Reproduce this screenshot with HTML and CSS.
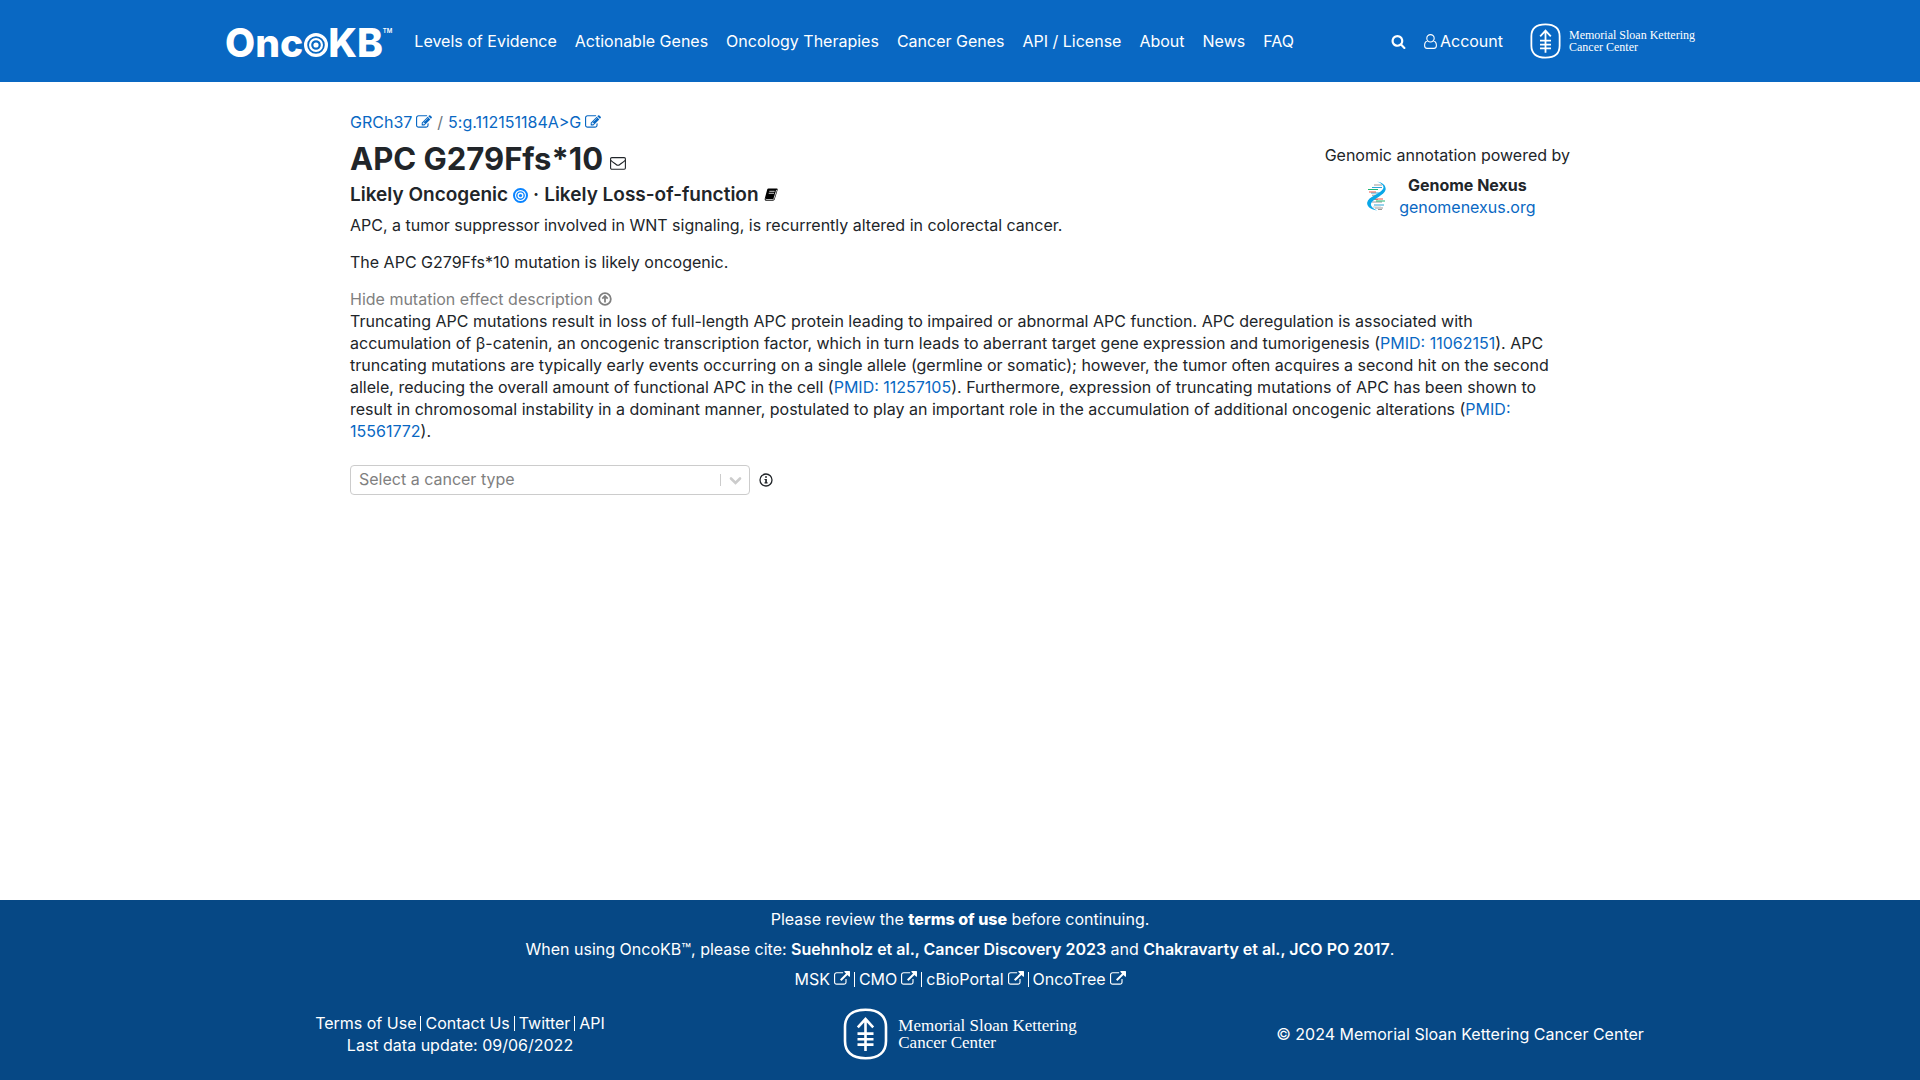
FILE: index.html
```html
<!DOCTYPE html>
<html lang="en">
<head>
<meta charset="utf-8">
<meta name="viewport" content="width=device-width, initial-scale=1">
<title>APC G279Ffs*10 | OncoKB</title>
<link rel="stylesheet" href="styles.css">
</head>
<body>
<svg class="sprite" aria-hidden="true">
  <symbol id="search" viewBox="0 0 1792 1792"><path fill="currentColor" d="M1216 832q0-185-131.500-316.500t-316.500-131.500-316.500 131.500-131.500 316.500 131.500 316.500 316.500 131.500 316.500-131.500 131.500-316.500zm512 832q0 52-38 90t-90 38q-54 0-90-38l-343-342q-179 124-399 124-143 0-273.500-55.500t-225-150-150-225-55.500-273.500 55.500-273.500 150-225 225-150 273.500-55.500 273.500 55.500 225 150 150 225 55.500 273.500q0 220-124 399l343 343q37 37 37 90z"/></symbol>
  <symbol id="edit" viewBox="0 0 1792 1792"><path fill="currentColor" d="M888 1184l116-116-152-152-116 116v56h96v96h56zm440-720q-16-16-33 1l-350 350q-17 17-1 33t33-1l350-350q17-17 1-33zm80 594v190q0 119-84.500 203.500t-203.500 84.500h-832q-119 0-203.500-84.500t-84.500-203.500v-832q0-119 84.500-203.500t203.500-84.500h832q63 0 117 25 15 7 18 23 3 17-9 29l-49 49q-14 14-32 8-23-6-45-6h-832q-66 0-113 47t-47 113v832q0 66 47 113t113 47h832q66 0 113-47t47-113v-126q0-13 9-22l64-64q15-15 35-7t20 29zm-96-738l288 288-672 672h-288v-288zm444 132l-92 92-288-288 92-92q28-28 68-28t68 28l152 152q28 28 28 68t-28 68z"/></symbol>
  <symbol id="external" viewBox="0 0 1792 1792"><path fill="currentColor" d="M1408 928v320q0 119-84.500 203.500t-203.500 84.500h-832q-119 0-203.500-84.500t-84.500-203.500v-832q0-119 84.500-203.500t203.500-84.500h704q14 0 23 9t9 23v64q0 14-9 23t-23 9h-704q-66 0-113 47t-47 113v832q0 66 47 113t113 47h832q66 0 113-47t47-113v-320q0-14 9-23t23-9h64q14 0 23 9t9 23zm384-864v512q0 26-19 45t-45 19-45-19l-176-176-652 652q-10 10-23 10t-23-10l-114-114q-10-10-10-23t10-23l652-652-176-176q-19-19-19-45t19-45 45-19h512q26 0 45 19t19 45z"/></symbol>
  <symbol id="user" viewBox="0 0 13 15"><path fill="none" stroke="currentColor" stroke-width="1.1" d="M3.600 6.800C1.200 7.400.6 9.500.6 11.600c0 1.800 1 2.800 2.400 2.800h7c1.400 0 2.400-1 2.400-2.800 0-2.100-.6-4.200-3-4.800M6.500.6a3.700 3.700 0 1 1 0 7.400a3.700 3.700 0 1 1 0-7.400z"/></symbol>
  <symbol id="mail" viewBox="0 0 16 13"><g fill="none" stroke="currentColor" stroke-width="1.100"><rect x=".6" y=".6" width="14.800" height="11.600" rx="1.200"/><path d="M.8 3.300c2 1.700 3.500 2.800 5.300 4.200 1.300 1 2.500 1 3.800 0 1.800-1.400 3.300-2.500 5.300-4.200"/></g></symbol>
  <symbol id="book" viewBox="0 0 14 14"><path fill="currentColor" d="M4.500.5h8c1 0 1.400.7 1.100 1.600l-2.800 9c-.3 1-1 1.600-2 1.600H1.900c-.9 0-1.500-1.300-1.100-2.300L3.200 1.600C3.400.9 3.800.5 4.500.5z"/><path fill="none" stroke="#fff" stroke-width=".8" d="M5.300 3.300h5.400M4.700 5.300h5.400M1.700 10.700c0 .7.300.9.900.9h6.100c.7 0 1-.3 1.200-.9l2.700-8.800"/></symbol>
  <symbol id="target" viewBox="0 0 24 24"><g fill="none" stroke="currentColor"><circle cx="12" cy="12" r="10.400" stroke-width="3.200"/><circle cx="12" cy="12" r="5.900" stroke-width="2.200"/></g><circle cx="12" cy="12" r="2.600" fill="currentColor"/></symbol>
  <symbol id="up" viewBox="0 0 14 14"><g fill="none" stroke="currentColor" stroke-width="1.800"><circle cx="7" cy="7" r="5.800"/><path d="M7 10.500V4M4.300 6.600 7 3.900l2.700 2.700"/></g></symbol>
  <symbol id="info" viewBox="0 0 14 14"><circle cx="7" cy="7" r="6" fill="none" stroke="currentColor" stroke-width="1.300"/><path fill="currentColor" d="M6.100 3.300h1.800v1.500H6.100zM5.500 5.900h2.400v3.400h.7v1.200H5.500V9.300h.7V7.100h-.7z"/></symbol>
  <symbol id="msk" viewBox="0 0 45 52">
    <g fill="none" stroke="#fff" stroke-width="2.600">
      <path d="M22.500 1.800C36.500 1.800 43 8.500 43 19v14c0 10.500-6.500 17.200-20.500 17.200S2 43.500 2 33V19C2 8.500 8.500 1.800 22.500 1.800z"/>
      <path d="M22.500 43V11M14.800 19.300l7.700-8.300 7.700 8.300M14.500 25.600h16M14.500 31.200h16M14.500 36.600h16"/>
    </g>
  </symbol>
</svg>

<header class="header">
  <div class="container bar">
    <a class="brand" href="#" aria-label="OncoKB">
      <span>Onc</span><svg class="brand-target"><use href="#target"/></svg><span>KB</span><span class="brand-tm">TM</span>
    </a>
    <nav class="nav">
      <a href="#">Levels of Evidence</a>
      <a href="#">Actionable Genes</a>
      <a href="#">Oncology Therapies</a>
      <a href="#">Cancer Genes</a>
      <a href="#">API / License</a>
      <a href="#">About</a>
      <a href="#">News</a>
      <a href="#">FAQ</a>
    </nav>
    <div class="tools">
      <button class="icon-button" aria-label="Search"><svg class="search-icon"><use href="#search"/></svg></button>
      <a class="account" href="#"><svg class="user-icon"><use href="#user"/></svg>Account</a>
      <a class="msk msk-small" href="#"><svg class="emblem"><use href="#msk"/></svg><span>Memorial Sloan Kettering<br>Cancer Center</span></a>
    </div>
  </div>
</header>

<main class="main">
  <div class="content">
    <nav class="crumbs" aria-label="Genomic change">
      <a href="#">GRCh37 <svg class="edit-icon"><use href="#edit"/></svg></a>
      <span class="slash">/</span>
      <a href="#">5:g.112151184A&gt;G <svg class="edit-icon"><use href="#edit"/></svg></a>
    </nav>
    <div class="overview">
      <div class="summary">
        <h1 class="title">APC G279Ffs*10 <svg class="mail-icon" role="img" aria-label="Send feedback"><use href="#mail"/></svg></h1>
        <h2 class="effect"><span>Likely Oncogenic</span><svg class="target-icon"><use href="#target"/></svg><span>·</span><span>Likely Loss-of-function</span><svg class="book-icon"><use href="#book"/></svg></h2>
        <p class="text">APC, a tumor suppressor involved in WNT signaling, is recurrently altered in colorectal cancer.</p>
        <p class="text">The APC G279Ffs*10 mutation is likely oncogenic.</p>
      </div>
      <aside class="powered">
        <div>Genomic annotation powered by</div>
        <div class="nexus">
          <svg class="dna" viewBox="0 0 20 30">
            <path stroke="#999" d="M7 4h8M3 18.500h8M5 21h10M8 27h8M11 28.500h4M5 14.500h5"/>
            <path stroke="#2aa5d8" d="M5 6.500h10M7 24h10M4 12h12"/>
            <path stroke="#20b573" d="M1 8.500h10M9 20h9"/>
            <path stroke="#ee5a4a" d="M2 11h7M8 18h8"/>
            <path stroke="#ccc" d="M5 14h7M6 26h8"/>
            <path fill="#0aa7e8" d="M10 .5c6 1 9.500 4.500 8.500 8.500-1 5-11.800 8.500-14.200 13-1.300 2.800.7 5 5.700 7.500-6-.7-10.500-4-9.800-8C1.200 15.500 13 13 16 8c1.500-2.500-.5-5.300-6-7.500z"/>
          </svg>
          <div class="nexus-name"><strong>Genome Nexus</strong><a href="#">genomenexus.org</a></div>
        </div>
      </aside>
    </div>
    <button class="toggle">Hide mutation effect description <svg class="up-icon"><use href="#up"/></svg></button>
    <p class="description">Truncating APC mutations result in loss of full-length APC protein leading to impaired or abnormal APC function. APC deregulation is associated with accumulation of β-catenin, an oncogenic transcription factor, which in turn leads to aberrant target gene expression and tumorigenesis (<a href="#">PMID: 11062151</a>). APC truncating mutations are typically early events occurring on a single allele (germline or somatic); however, the tumor often acquires a second hit on the second allele, reducing the overall amount of functional APC in the cell (<a href="#">PMID: 11257105</a>). Furthermore, expression of truncating mutations of APC has been shown to result in chromosomal instability in a dominant manner, postulated to play an important role in the accumulation of additional oncogenic alterations (<a href="#">PMID: 15561772</a>).</p>
    <div class="picker">
      <div class="select-box">
        <select class="select" aria-label="Select a cancer type"><option>Select a cancer type</option></select>
        <svg class="select-mark" viewBox="0 0 24 14"><path fill="none" stroke="#ccc" stroke-width="1" d="M.5 1v12"/><path fill="none" stroke="#ccc" stroke-width="2.600" stroke-linecap="round" d="M11 5.500l4.500 4.500L20 5.500"/></svg>
      </div>
      <svg class="info-icon"><use href="#info"/></svg>
    </div>
  </div>
</main>

<footer class="footer">
  <div class="notes">
    <div>Please review the <a class="terms" href="#">terms of use</a> before continuing.</div>
    <div>When using OncoKB™, please cite: <a class="cite" href="#">Suehnholz et al., Cancer Discovery 2023</a> and <a class="cite" href="#">Chakravarty et al., JCO PO 2017</a>.</div>
    <div class="links">
      <a href="#">MSK <svg class="external-icon"><use href="#external"/></svg></a>
      <a href="#">CMO <svg class="external-icon"><use href="#external"/></svg></a>
      <a href="#">cBioPortal <svg class="external-icon"><use href="#external"/></svg></a>
      <a href="#">OncoTree <svg class="external-icon"><use href="#external"/></svg></a>
    </div>
  </div>
  <div class="columns">
    <div>
      <div class="links"><a href="#">Terms of Use</a><a href="#">Contact Us</a><a href="#">Twitter</a><a href="#">API</a></div>
      <div>Last data update: <a href="#">09/06/2022</a></div>
    </div>
    <a class="msk msk-large" href="#"><svg class="emblem"><use href="#msk"/></svg><span>Memorial Sloan Kettering<br>Cancer Center</span></a>
    <div>© 2024 Memorial Sloan Kettering Cancer Center</div>
  </div>
</footer>
</body>
</html>
```
FILE: styles.css
```css
* { box-sizing: border-box; }
body {
  margin: 0;
  min-height: 100vh;
  display: flex;
  flex-direction: column;
  background: #fff;
  color: #212529;
  font: 16px/22px Inter, "Liberation Sans", sans-serif;
}
a { color: #0968c3; text-decoration: none; }
button { border: 0; padding: 0; background: none; color: inherit; font: inherit; }
svg { flex: none; }
.sprite { position: absolute; width: 0; height: 0; }

.header { background: #0968c3; color: #fff; }
.header a, .footer a { color: inherit; }
.container { width: 100%; max-width: 1500px; margin: 0 auto; padding: 0 15px; }
.bar { display: flex; align-items: center; height: 82px; }
.brand { display: flex; align-items: baseline; font-size: 39px; line-height: 48px; font-weight: 800; padding-top: 4px; }
.brand-target { width: 24px; height: 24px; margin-left: 1px; }
.brand-tm { align-self: flex-start; padding-top: 7px; font-size: 6px; line-height: 10px; font-weight: 600; }
.nav { display: flex; gap: 18px; margin-left: 22px; padding-bottom: 1px; white-space: nowrap; }
.tools { display: flex; align-items: center; gap: 18px; margin-left: auto; }
.search-icon { display: block; width: 15px; height: 15px; }
.account { display: flex; align-items: center; gap: 3px; margin-right: 9px; }
.user-icon { width: 13px; height: 15px; }
.msk { display: flex; align-items: center; text-align: left; font-family: "Liberation Serif", serif; white-space: nowrap; }
.msk-small { gap: 8px; font-size: 12px; line-height: 12px; }
.msk-small .emblem { width: 31px; height: 36px; }
.msk-large { gap: 10px; font-size: 17px; line-height: 17px; }
.msk-large .emblem { width: 45px; height: 52px; }

.main { flex: 1; }
.content { width: 100%; max-width: 1250px; margin: 0 auto; padding: 29px 15px; }
.crumbs { display: flex; gap: 5px; }
.crumbs a { display: flex; align-items: center; gap: 4px; }
.slash { color: #6c757d; }
.edit-icon { width: 16px; height: 16px; }
.overview { display: flex; justify-content: space-between; }
.title { margin: 7px 0 5px; font-size: 31px; line-height: 38px; font-weight: 700; }
.mail-icon { width: 16px; height: 13px; }
.effect { display: flex; align-items: center; gap: 5px; margin: 0 0 7px; font-size: 19px; line-height: 24px; font-weight: 600; }
.target-icon { width: 15px; height: 15px; color: #0a84ff; }
.book-icon { width: 14px; height: 14px; color: #000; }
.text { margin: 0 0 15px; }
.powered { padding-top: 11px; text-align: center; }
.nexus { display: flex; justify-content: center; align-items: center; gap: 12px; margin-top: 8px; padding-left: 8px; }
.nexus-name { display: flex; flex-direction: column; }
.dna { width: 20px; height: 30px; fill: none; }
.toggle { display: flex; align-items: center; gap: 5px; color: #808080; cursor: pointer; }
.up-icon { width: 14px; height: 14px; }
.description { margin: 0 0 23px; }
.picker { display: flex; align-items: center; gap: 9px; }
.select-box { display: grid; width: 400px; }
.select {
  grid-area: 1 / 1;
  height: 30px;
  padding: 0 8px 2px;
  appearance: none;
  border: 1px solid #ccc;
  border-radius: 4px;
  background: #fff;
  color: #808080;
  font: inherit;
}
.select-mark { grid-area: 1 / 1; place-self: center end; width: 24px; height: 14px; margin-right: 6px; pointer-events: none; }
.info-icon { width: 14px; height: 14px; }

.footer { background: #064885; color: #fff; text-align: center; padding: 8px 0 20px; }
.notes { display: flex; flex-direction: column; gap: 8px; }
.terms { font-weight: 800; }
.cite { font-weight: 600; }
.links { display: flex; justify-content: center; }
.links a { display: flex; align-items: center; gap: 4px; padding: 0 4px; }
.links a + a::before { content: ""; width: 1px; height: 15px; margin-left: -4px; background: #fff; }
.external-icon { width: 16px; height: 16px; }
.columns { display: grid; grid-template-columns: repeat(3, 1fr); align-items: center; justify-items: center; max-width: 1500px; margin: 18px auto 0; }
```
